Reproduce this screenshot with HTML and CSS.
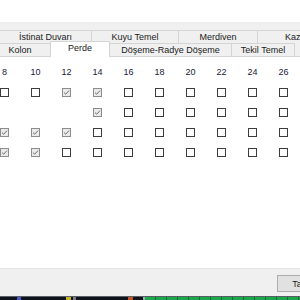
FILE: index.html
```html
<!DOCTYPE html>
<html>
<head>
<meta charset="utf-8">
<link rel="stylesheet" href="styles.css">
</head>
<body>
<div class="win">
  <div class="top"></div>
  <div class="tabs">
    <div class="row row1">
      <div class="tab w-ist">İstinat Duvarı</div>
      <div class="tab w-kuyu">Kuyu Temel</div>
      <div class="tab w-mer">Merdiven</div>
      <div class="tab w-kaz">Kazık</div>
    </div>
    <div class="row row2">
      <div class="tab w-kol">Kolon</div>
      <div class="tab w-per sel">Perde</div>
      <div class="tab w-dos">Döşeme-Radye Döşeme</div>
      <div class="tab w-tek">Tekil Temel</div>
      <div class="fill"></div>
    </div>
  </div>
  <div class="panel">
    <div class="grid">
      <span class="lbl">8</span><span class="lbl">10</span><span class="lbl">12</span><span class="lbl">14</span><span class="lbl">16</span><span class="lbl">18</span><span class="lbl">20</span><span class="lbl">22</span><span class="lbl">24</span><span class="lbl">26</span>

      <span class="cb"></span><span class="cb"></span><span class="cb on"><svg viewBox="0 0 7 7"><polyline points="1,3.6 2.7,5.2 6,1.6"/></svg></span><span class="cb on"><svg viewBox="0 0 7 7"><polyline points="1,3.6 2.7,5.2 6,1.6"/></svg></span><span class="cb"></span><span class="cb"></span><span class="cb"></span><span class="cb"></span><span class="cb"></span><span class="cb"></span>

      <span class="none"></span><span class="none"></span><span class="none"></span><span class="cb on"><svg viewBox="0 0 7 7"><polyline points="1,3.6 2.7,5.2 6,1.6"/></svg></span><span class="cb"></span><span class="cb"></span><span class="cb"></span><span class="cb"></span><span class="cb"></span><span class="cb"></span>

      <span class="cb on"><svg viewBox="0 0 7 7"><polyline points="1,3.6 2.7,5.2 6,1.6"/></svg></span><span class="cb on"><svg viewBox="0 0 7 7"><polyline points="1,3.6 2.7,5.2 6,1.6"/></svg></span><span class="cb on"><svg viewBox="0 0 7 7"><polyline points="1,3.6 2.7,5.2 6,1.6"/></svg></span><span class="cb"></span><span class="cb"></span><span class="cb"></span><span class="cb"></span><span class="cb"></span><span class="cb"></span><span class="cb"></span>

      <span class="cb on"><svg viewBox="0 0 7 7"><polyline points="1,3.6 2.7,5.2 6,1.6"/></svg></span><span class="cb on"><svg viewBox="0 0 7 7"><polyline points="1,3.6 2.7,5.2 6,1.6"/></svg></span><span class="cb"></span><span class="cb"></span><span class="cb"></span><span class="cb"></span><span class="cb"></span><span class="cb"></span><span class="cb"></span><span class="cb"></span>
    </div>
  </div>
  <div class="footer">
    <div class="btn">Tamam</div>
  </div>
  <div class="taskbar">
    <div class="tb-dark">
      <span class="sp sp-blue"></span>
      <span class="sp sp-yellow"></span>
      <span class="sp sp-gray"></span>
      <span class="sp sp-orange"></span>
      <span class="sp sp-light"></span>
    </div>
    <div class="tb-green"></div>
  </div>
</div>
</body>
</html>
```

FILE: styles.css
```css
* { box-sizing: border-box; }
html, body { margin: 0; padding: 0; }
body {
  width: 300px;
  height: 300px;
  overflow: hidden;
  background: #ffffff;
  font-family: "Liberation Sans", Arial, sans-serif;
  font-size: 9px;
  color: #1a1a1a;
}
.win {
  display: flex;
  flex-direction: column;
  width: 300px;
  height: 300px;
  overflow: hidden;
}
.top { height: 22px; background: #ffffff; flex: none; }
.tabs {
  height: 35px;
  flex: none;
  background: #f0f0f0;
  padding-top: 8px;
  display: flex;
  flex-direction: column;
}
.row { display: flex; flex: none; }
.row1 { height: 13px; }
.row2 { height: 14px; margin-left: -11px; }
.tab {
  flex: none;
  display: flex;
  align-items: center;
  justify-content: center;
  white-space: nowrap;
  background: #f0f0f0;
  border-top: 1px solid #d4d4d4;
  border-right: 1px solid #d4d4d4;
  line-height: 1;
}
.row1 .tab { padding-top: 1px; }
.row2 .tab { border-bottom: 1px solid #d4d4d4; padding-top: 1px; }
.w-ist { width: 92px; }
.w-kuyu { width: 87px; }
.w-mer { width: 79px; }
.w-kaz { width: 80px; justify-content: flex-start; padding-left: 27px; }
.w-kol { width: 62px; border-left: 1px solid #d4d4d4; }
.w-per { width: 60px; }
.w-dos { width: 122px; }
.w-tek { width: 63px; }
.fill { flex: 1; border-bottom: 1px solid #d4d4d4; }
.row2 .tab.sel {
  position: relative;
  z-index: 1;
  background: #ffffff;
  height: 16px;
  margin-top: -2px;
  border-bottom: none;
  border-left: 1px solid #d4d4d4;
  margin-left: -1px;
  padding-top: 0;
  padding-bottom: 2px;
}
.panel {
  height: 211px;
  flex: none;
  background: #ffffff;
  padding-top: 5px;
}
.grid {
  display: grid;
  grid-template-columns: repeat(10, 31px);
  grid-auto-rows: 20px;
  margin-left: -11px;
  justify-items: center;
  align-items: center;
}
.lbl { color: #20203a; font-size: 9px; line-height: 1; }
.cb {
  width: 9px;
  height: 9px;
  border: 1px solid #3c3c3c;
  background: #ffffff;
  display: block;
}
.cb.on {
  border-color: #8c8c8c;
  background: #eaeaea;
}
.cb svg {
  display: block;
  width: 7px;
  height: 7px;
}
.cb svg polyline {
  fill: none;
  stroke: #6e6e6e;
  stroke-width: 1;
}
.none { display: block; width: 9px; height: 9px; }
.footer {
  height: 28px;
  flex: none;
  background: #f0f0f0;
  border-top: 1px solid #e3e3e3;
  display: flex;
  justify-content: flex-end;
  padding-top: 6px;
}
.btn {
  width: 60px;
  height: 17px;
  margin-right: -37px;
  background: #e1e1e1;
  border: 1px solid #adadad;
  display: flex;
  align-items: center;
  justify-content: center;
  color: #1a1a1a;
  font-size: 9px;
}
.taskbar {
  height: 4px;
  flex: none;
  display: flex;
  border-top: 1px solid #5a5e66;
}
.tb-dark {
  width: 145px;
  flex: none;
  background: #0f141c;
  display: flex;
}
.sp { display: block; height: 3px; flex: none; }
.sp-blue { width: 4px; margin-left: 17px; background: #4a5cc8; }
.sp-yellow { width: 5px; margin-left: 45px; background: #c9b52a; }
.sp-gray { width: 3px; margin-left: 2px; background: #7b7b7b; }
.sp-orange { width: 5px; margin-left: 52px; background: #c2562a; }
.sp-light { width: 4px; margin-left: 10px; background: #a4acb4; }
.tb-green {
  flex: 1;
  background: repeating-linear-gradient(to right, #1ea84c 0px, #1ea84c 10px, #0f6e33 10px, #0f6e33 11px);
}
```
